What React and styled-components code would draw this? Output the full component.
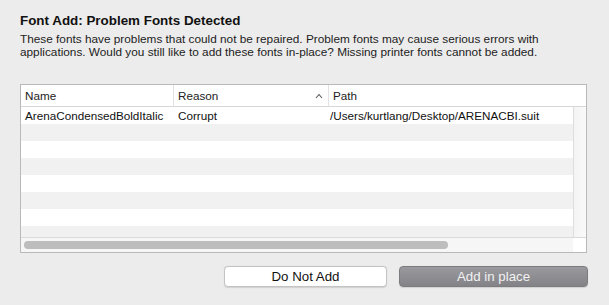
import React from 'react';
import styled, { createGlobalStyle } from 'styled-components';

const GlobalStyle = createGlobalStyle`
  html, body {
    margin: 0;
    background: #ececec;
  }
  body {
    font-family: "Liberation Sans", Arial, sans-serif;
    color: #1a1a1a;
  }
`;

const Dialog = styled.div`
  width: 609px;
  height: 305px;
  box-sizing: border-box;
  padding: 13px 22px 0 20px;
  display: flex;
  flex-direction: column;
  overflow: hidden;
`;

const Title = styled.h1`
  margin: 0;
  font-size: 13.4px;
  line-height: 16px;
  font-weight: bold;
  color: #111;
`;

const Message = styled.p`
  margin: 4px 0 0;
  font-size: 11.8px;
  line-height: 13px;
  color: #1c1c1c;
  white-space: nowrap;
`;

const Table = styled.div`
  margin-top: 25px;
  height: 169px;
  border: 1px solid #b9b9b9;
  background: #fff;
  display: grid;
  grid-template-rows: 22px 1fr 15px;
  box-sizing: border-box;
`;

const HeaderRow = styled.div`
  display: grid;
  grid-template-columns: 152px 155px 1fr;
  border-bottom: 1px solid #d6d6d6;
  background: #fff;
`;

const HeaderCell = styled.div`
  display: flex;
  align-items: center;
  justify-content: space-between;
  padding: 0 6px 0 4px;
  font-size: 11.7px;
  color: #222;
  & + & {
    border-left: 1px solid #e2e2e2;
  }
`;

const SortArrow = styled.svg`
  width: 8px;
  height: 6px;
  margin-right: -1px;
`;

const BodyArea = styled.div`
  display: grid;
  grid-template-columns: 1fr 13px;
  overflow: hidden;
`;

const Rows = styled.div`
  overflow: hidden;
`;

const Row = styled.div`
  display: grid;
  grid-template-columns: 152px 155px 1fr;
  height: 17px;
  background: ${({ $striped }) => ($striped ? '#f1f1f1' : '#fff')};
`;

const Cell = styled.div`
  padding: 0 4px;
  font-size: 11.7px;
  line-height: 17px;
  white-space: nowrap;
  color: #111;
  &:nth-child(2) {
    padding-left: 5px;
  }
  &:nth-child(3) {
    padding-left: 2px;
  }
`;

const VScroll = styled.div`
  border-left: 1px solid #dedede;
  background: linear-gradient(to right, #f4f4f4, #fafafa);
`;

const HScroll = styled.div`
  display: grid;
  grid-template-columns: 1fr 13px;
  border-top: 1px solid #dadada;
  background: #f6f6f6;
`;

const Track = styled.div`
  padding: 3px 0 0 3px;
`;

const Thumb = styled.div`
  height: 8px;
  width: 424px;
  border-radius: 4px;
  background: #bdbdbd;
`;

const Corner = styled.div`
  background: #fff;
`;

const Buttons = styled.div`
  margin-top: 13px;
  display: flex;
  justify-content: flex-end;
  gap: 12px;
  margin-right: -1px;
`;

const Button = styled.button`
  width: ${({ $width }) => $width}px;
  height: 21px;
  border-radius: 4px;
  font-family: "Liberation Sans", Arial, sans-serif;
  font-size: 13.3px;
  padding: 0;
  border: 1px solid ${({ $primary }) => ($primary ? '#7b7b80' : '#c3c3c3')};
  color: ${({ $primary }) => ($primary ? '#f2f2f2' : '#111')};
  background: ${({ $primary }) => ($primary ? 'linear-gradient(#9a9a9e, #828287)' : '#fff')};
  box-shadow: 0 0.5px 1px rgba(0, 0, 0, 0.12);
`;

const rows = [
  ['ArenaCondensedBoldItalic', 'Corrupt', '/Users/kurtlang/Desktop/ARENACBI.suit'],
  ...Array.from({ length: 7 }, () => ['', '', '']),
];

const App = () => (
  <>
    <GlobalStyle />
    <Dialog>
      <Title>Font Add: Problem Fonts Detected</Title>
      <Message>
        These fonts have problems that could not be repaired. Problem fonts may cause serious errors with
        <br />
        applications. Would you still like to add these fonts in-place? Missing printer fonts cannot be added.
      </Message>
      <Table>
        <HeaderRow>
          <HeaderCell>Name</HeaderCell>
          <HeaderCell>
            Reason
            <SortArrow viewBox="0 0 8 6">
              <path d="M1 5 L4 1.5 L7 5" fill="none" stroke="#555" strokeWidth="1.1" />
            </SortArrow>
          </HeaderCell>
          <HeaderCell>Path</HeaderCell>
        </HeaderRow>
        <BodyArea>
          <Rows>
            {rows.map((r, i) => (
              <Row key={i} $striped={i % 2 === 1}>
                {r.map((c, j) => (
                  <Cell key={j}>{c}</Cell>
                ))}
              </Row>
            ))}
          </Rows>
          <VScroll />
        </BodyArea>
        <HScroll>
          <Track>
            <Thumb />
          </Track>
          <Corner />
        </HScroll>
      </Table>
      <Buttons>
        <Button $width={163}>Do Not Add</Button>
        <Button $width={189} $primary>Add in place</Button>
      </Buttons>
    </Dialog>
  </>
);

export default App;
